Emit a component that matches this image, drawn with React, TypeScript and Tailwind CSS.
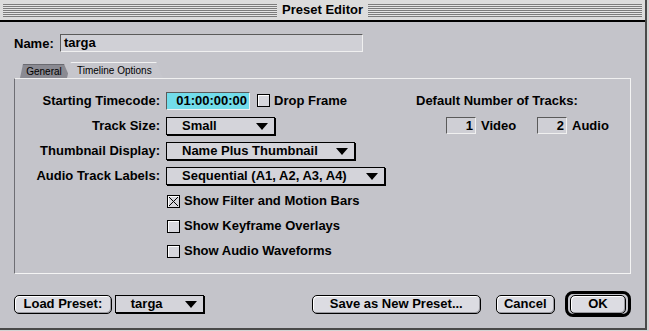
import React from "react";

const stripes =
  "bg-[repeating-linear-gradient(to_bottom,#7c7c7c_0px,#7c7c7c_1px,#e4e4e4_1px,#e4e4e4_2px)]";

const Arrow = () => (
  <svg width="12" height="7" viewBox="0 0 12 7" className="shrink-0">
    <path d="M0 0 H12 L6 7 Z" fill="#000" />
  </svg>
);

const Popup = ({ text, width }: { text: string; width: string }) => (
  <div
    className={`${width} h-[18px] flex items-center justify-between pl-[15px] pr-[6px] bg-[#d4d4da] border border-black shadow-[1px_1px_0_#000] text-[13px] font-bold`}
  >
    <span>{text}</span>
    <Arrow />
  </div>
);

const Check = ({ label, checked }: { label: string; checked?: boolean }) => (
  <div className="flex items-center gap-[4px]">
    <div className="w-[13px] h-[13px] border border-black bg-[#d6d6dc] shadow-[inset_1px_1px_0_#fff]">
      {checked && (
        <svg width="11" height="11" viewBox="0 0 11 11">
          <path d="M1 1 L10 10 M10 1 L1 10" stroke="#000" strokeWidth="1" />
        </svg>
      )}
    </div>
    <span className="text-[13px] font-bold">{label}</span>
  </div>
);

const Button = ({ label, width }: { label: string; width: string }) => (
  <div
    className={`${width} h-[19px] flex items-center justify-center rounded-[5px] border border-black bg-[#dcdce2] shadow-[inset_1px_1px_0_#fff,inset_-1px_-1px_0_#9a9aa0] text-[13px] font-bold`}
  >
    {label}
  </div>
);

const Label = ({ text }: { text: string }) => (
  <div className="h-[19px] flex items-center justify-end text-[13px] font-bold">{text}</div>
);

const sunken =
  "border-t border-l border-[#5a5a5a] border-r border-b border-r-[#f0f0f0] border-b-[#f0f0f0]";

export default function App() {
  return (
    <div className="w-[649px] h-[331px] bg-[#d4d4d4] text-black font-['Liberation_Sans',Arial,sans-serif]">
      <div className="w-[647px] h-[330px] flex flex-col bg-[#c4c4ca] border-r-2 border-b-2 border-[#4a4a4a]">
        {/* title bar */}
        <div className="h-[20px] flex items-center px-[3px] gap-[5px] bg-[#dcdcdc] border-b-2 border-black box-content">
          <div className={`flex-1 h-[13px] ${stripes}`} />
          <div className="text-[13px] font-bold">Preset Editor</div>
          <div className={`flex-1 h-[13px] ${stripes}`} />
        </div>

        <div className="flex flex-col px-[14px]">
          {/* name */}
          <div className="flex items-center mt-[12px] h-[18px]">
            <span className="text-[13px] font-bold w-[46px] pt-[2px]">Name:</span>
            <div className={`w-[303px] h-[18px] flex items-center px-[3px] bg-[#d0d0d6] ${sunken} text-[13px] font-bold`}>
              targa
            </div>
          </div>

          {/* tabs */}
          <div className="flex items-end mt-[10px] pl-[6px] h-[16px]">
            <div className="w-[50px] h-[14px] flex items-center justify-center rounded-tl-[4px] bg-[#8a8a92] border-t border-[#6a6a70] text-[10px] [clip-path:polygon(6%_0,88%_0,100%_100%,0_100%)]">
              <span className="pr-[2px]">General</span>
            </div>
            <div className="-ml-[3px] w-[96px] h-[16px] flex items-center rounded-tl-[5px] bg-[#c6c6cc] border-t border-[#f2f2f2] text-[10px] [clip-path:polygon(4%_0,93%_0,100%_100%,0_100%)]">
              <span className="pl-[10px]">Timeline Options</span>
            </div>
          </div>

          {/* panel */}
          <div className="h-[196px] flex border-l border-t border-l-[#6e6e74] border-t-[#f0f0f0] border-r border-b border-r-[#f4f4f4] border-b-[#f4f4f4] pt-[12px]">
            <div className="w-[401px] grid grid-cols-[145px_auto] gap-x-[6px] gap-y-[6px] content-start">
              <Label text="Starting Timecode:" />
              <div className="flex items-center gap-[7px]">
                <div className={`w-[84px] h-[18px] flex items-center justify-end pr-[2px] bg-[#72dcea] ${sunken} text-[13px] font-bold`}>
                  01:00:00:00
                </div>
                <Check label="Drop Frame" />
              </div>

              <Label text="Track Size:" />
              <div className="flex items-center"><Popup text="Small" width="w-[109px]" /></div>

              <Label text="Thumbnail Display:" />
              <div className="flex items-center"><Popup text="Name Plus Thumbnail" width="w-[189px]" /></div>

              <Label text="Audio Track Labels:" />
              <div className="flex items-center"><Popup text="Sequential (A1, A2, A3, A4)" width="w-[219px]" /></div>

              <div />
              <div className="h-[19px] flex items-center pl-[1px]"><Check label="Show Filter and Motion Bars" checked /></div>
              <div />
              <div className="h-[19px] flex items-center pl-[1px]"><Check label="Show Keyframe Overlays" /></div>
              <div />
              <div className="h-[19px] flex items-center pl-[1px]"><Check label="Show Audio Waveforms" /></div>
            </div>

            <div className="flex flex-col pt-[1px]">
              <div className="text-[13px] font-bold h-[17px] flex items-center">Default Number of Tracks:</div>
              <div className="flex items-center mt-[7px] pl-[30px]">
                <div className={`w-[30px] h-[17px] flex items-center justify-end pr-[2px] bg-[#cfcfd5] ${sunken} text-[13px] font-bold`}>1</div>
                <span className="ml-[5px] w-[56px] text-[13px] font-bold">Video</span>
                <div className={`w-[30px] h-[17px] flex items-center justify-end pr-[2px] bg-[#cfcfd5] ${sunken} text-[13px] font-bold`}>2</div>
                <span className="ml-[5px] text-[13px] font-bold">Audio</span>
              </div>
            </div>
          </div>

          {/* bottom buttons */}
          <div className="flex items-center mt-[17px] h-[26px]">
            <Button label="Load Preset:" width="w-[99px]" />
            <div className="ml-[3px]">
              <Popup text="targa" width="w-[89px]" />
            </div>
            <div className="ml-[108px]">
              <Button label="Save as New Preset..." width="w-[169px]" />
            </div>
            <div className="ml-[15px]">
              <Button label="Cancel" width="w-[59px]" />
            </div>
            <div className="ml-[10px] w-[67px] h-[26px] flex items-center justify-center rounded-[8px] border-[3px] border-black">
              <Button label="OK" width="w-[56px]" />
            </div>
          </div>
        </div>
      </div>
    </div>
  );
}
